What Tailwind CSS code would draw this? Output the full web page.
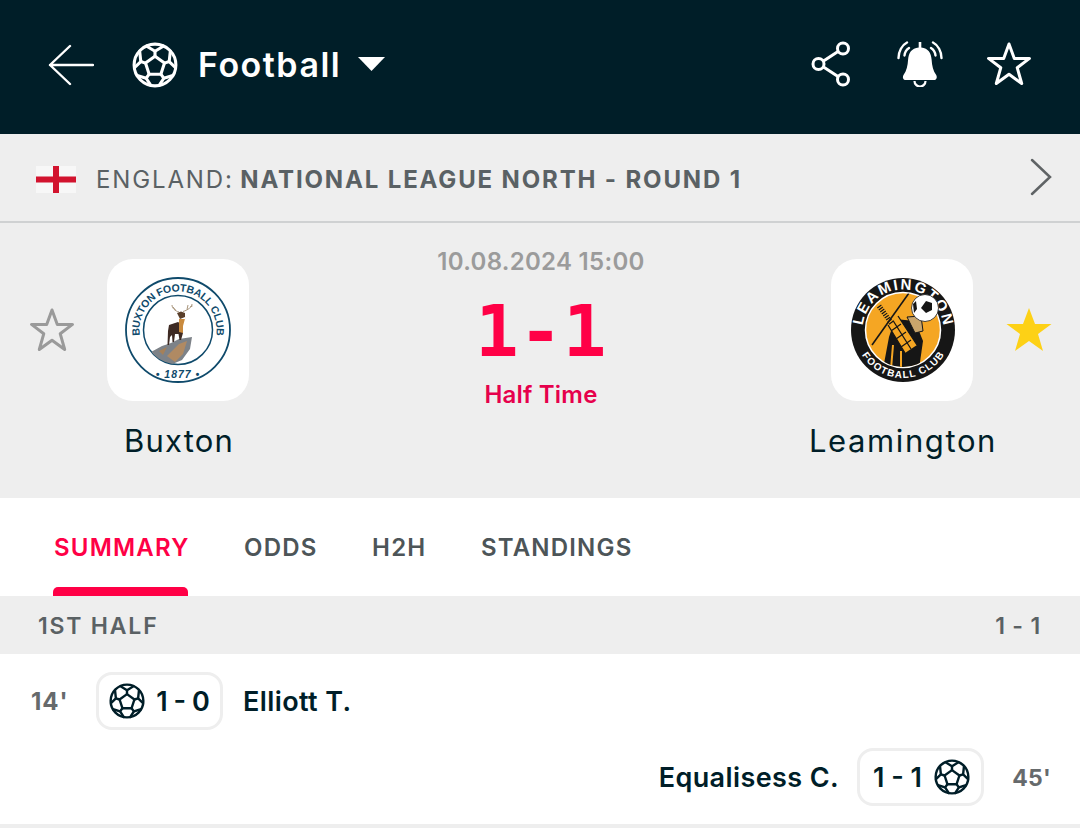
<!DOCTYPE html>
<html lang="en">
<head>
    <meta charset="UTF-8">
    <title>Buxton - Leamington</title>
    <script src="https://cdn.jsdelivr.net/npm/@tailwindcss/browser@4"></script>
</head>
<body class="w-[1080px] h-[828px] overflow-hidden bg-white font-['Inter',sans-serif] text-[#001e28]">
    <svg class="hidden">
        <symbol id="ball" viewBox="0 0 24 24">
            <g fill="none" stroke="currentColor" stroke-width="1.6" stroke-linejoin="round" stroke-linecap="round">
                <circle cx="12" cy="12" r="10.9"/>
                <path d="M12 7.400 16.950 11 15.060 16.800H8.940L7.050 11Z"/>
                <path d="M12 7.400V4.800M16.950 11 19.400 10.200M15.060 16.800 16.600 18.900M8.940 16.800 7.400 18.900M7.050 11 4.600 10.200"/>
                <path d="M7.700 2.200 12 4.800 16.300 2.200M20 4.800 19.400 10.200 22.700 13.400M21.300 17.500 16.600 18.900 14.200 22.600M9.800 22.600 7.400 18.900 2.700 17.500M1.300 13.400 4.600 10.200 4 4.800"/>
            </g>
        </symbol>
    </svg>

    <!-- Header -->
    <header class="h-[134px] bg-[#001e28] flex items-center pl-[48px] pr-[48px] text-white">
        <svg class="w-[46px] h-[42px] mb-[4px]" viewBox="0 0 46 42" fill="none" stroke="currentColor" stroke-width="2.4" stroke-linecap="round" stroke-linejoin="round">
            <path d="M22 2 2 21 22 40M2 21H45"/>
        </svg>
        <svg class="w-[46px] h-[46px] ml-[38px] mb-[5px]"><use href="#ball"/></svg>
        <span class="ml-[20px] text-[34px] font-semibold tracking-[1.500px] leading-none mb-[5px]">Football</span>
        <svg class="w-[27px] h-[14px] ml-[17px] mb-[6px]" viewBox="0 0 27 14" fill="currentColor"><path d="M0 0H27L13.500 14Z"/></svg>
        <div class="ml-auto flex items-center mb-[7px]">
            <svg class="w-[40px] h-[46px]" viewBox="0 0 40 46" fill="none" stroke="currentColor" stroke-width="3">
                <circle cx="32" cy="7.500" r="5.500"/>
                <circle cx="7.500" cy="23" r="5.500"/>
                <circle cx="32" cy="38.500" r="5.500"/>
                <path d="M12.500 20 27 10.500M12.500 26 27 35.500"/>
            </svg>
            <svg class="w-[46px] h-[46px] ml-[46px]" viewBox="0 0 46 46">
                <path fill="currentColor" d="M21.700 1h2.600v5.500c7 .8 9.800 5.500 10.300 12 .4 6 1.500 11.500 4.600 15.500 1 1.600.8 4.500-1.500 5H8c-2.300-.5-2.500-3.400-1.500-5 3.100-4 4.200-9.500 4.600-15.500.5-6.500 3.300-11.200 10.600-12Z"/>
                <path fill="none" stroke="currentColor" stroke-width="2.200" d="M17.500 40a5.500 5.500 0 0 0 11 0"/>
                <path fill="none" stroke="currentColor" stroke-width="2.400" stroke-linecap="round" d="M1.500 17C1.500 10.500 5 4 10 1.500M44.500 17C44.500 10.500 41 4 36 1.500M7.500 14.500C7.800 11.500 9.500 8.500 12 7M38.500 14.500C38.200 11.500 36.500 8.500 34 7"/>
            </svg>
            <svg class="w-[46px] h-[46px] ml-[43px]" viewBox="0 0 46 46" fill="none" stroke="currentColor" stroke-width="3" stroke-linejoin="round">
                <path d="M23 3 28.300 17.400H43.500L31.200 26.700 35.700 42.500 23 33.300 10.300 42.500 14.800 26.700 2.500 17.400H17.700Z"/>
            </svg>
        </div>
    </header>

    <!-- League bar -->
    <div class="h-[89px] bg-[#eeeeee] border-b-2 border-[#cfd1d2] flex items-center pl-[36px] pr-[28px] pt-[3px] text-[#5a6164]">
        <svg class="w-[40px] h-[27px] shrink-0" viewBox="0 0 40 27">
            <rect width="40" height="27" fill="#f7f7f7"/>
            <path fill="#d2132e" d="M17 0h6v27h-6zM0 10.500h40v6H0z"/>
        </svg>
        <span class="ml-[20px] pt-[1px] text-[24px] tracking-[1.85px] leading-none whitespace-nowrap">ENGLAND: <b class="-ml-[2px] font-bold">NATIONAL LEAGUE NORTH - ROUND 1</b></span>
        <svg class="ml-auto w-[22px] h-[38px] mb-[4px]" viewBox="0 0 22 38" fill="none" stroke="#5f6365" stroke-width="2.500" stroke-linecap="round">
            <path d="M2 2 20 19 2 36"/>
        </svg>
    </div>

    <!-- Match -->
    <section class="h-[275px] bg-[#eeeeee] flex pl-[29px] pr-[28px]">
        <svg class="w-[46px] h-[46px] mt-[84px] shrink-0" viewBox="0 0 46 46" fill="none" stroke="#9a9a9a" stroke-width="3" stroke-linejoin="round">
            <path d="M23 3 28.300 17.400H43.500L31.200 26.700 35.700 42.500 23 33.300 10.300 42.500 14.800 26.700 2.500 17.400H17.700Z"/>
        </svg>
        <div class="w-[206px] flex flex-col items-center pt-[36px] shrink-0">
            <div class="w-[142px] h-[142px] bg-white rounded-[26px]">
                <svg viewBox="0 0 142 142" class="w-full h-full">
                    <defs>
                        <clipPath id="inner"><circle cx="71" cy="71" r="34.500"/></clipPath>
                        <path id="buxTop" d="M32.900 76.400A38.500 38.500 0 1 1 109.100 76.400"/>
                    </defs>
                    <circle cx="71" cy="71" r="52" fill="none" stroke="#0f4a6b" stroke-width="1.800"/>
                    <circle cx="71" cy="71" r="34.500" fill="#fff" stroke="#0f4a6b" stroke-width="1.500"/>
                    <text font-family="Liberation Sans, sans-serif" font-size="10.500" font-weight="700" fill="#0f4a6b" text-anchor="middle"><textPath href="#buxTop" startOffset="50%" textLength="132">BUXTON FOOTBALL CLUB</textPath></text>
                    <text x="71" y="119" text-anchor="middle" font-family="Liberation Sans, sans-serif" font-style="italic" font-size="10.500" font-weight="700" fill="#0f4a6b" letter-spacing="1">• 1877 •</text>
                    <g clip-path="url(#inner)">
                        <path fill="#7d8288" d="M44 93 55 87 64 84 72 80 85 78 83 90 75 101 63 106 50 100Z"/>
                        <path fill="#b08a63" d="M60 97 72 85 80 82 76 95 68 103Z"/>
                        <path fill="#a58058" d="M52 92 60 88 56 96Z"/>
                    </g>
                    <path fill="#3e2a23" d="M62 66 71 63 76 66 76 74 74 81H72.500L71.500 75 68 75 67 83H65.500L65 76 63 78 62 86H60.500L61 72Z"/>
                    <path fill="#c98a3e" d="M72 60H78L79 56 76 67 76 74 72 73Z"/>
                    <path fill="#5a3f2b" d="M70 54 74 52.500 78 54 78 58 73 60Z"/>
                    <path fill="none" stroke="#a8957c" stroke-width="1" d="M72 53C68 52 65 49 65 46M68.500 51 66 48M76 52.500C81 51 85 48 85 45M80 50.500 81 46M83 48 85.500 47"/>
                </svg>
            </div>
            <span class="mt-[22px] ml-[2px] text-[31px] leading-[36px] tracking-[1.2px]">Buxton</span>
        </div>

        <div class="flex-1 flex flex-col items-center pl-[3px] pt-[25px]">
            <span class="text-[24px] leading-[28px] font-semibold text-[#9b9b9b] tracking-[0.3px]">10.08.2024 15:00</span>
            <span class="mt-[19px] h-[63px] text-[72px] leading-[72px] font-bold text-[#ff0046] [font-family:'DejaVu_Sans_Mono',monospace] tracking-[0.5px]">1-1</span>
            <span class="mt-[22px] text-[24px] leading-[30px] font-semibold text-[#e6004c] tracking-[0.2px]">Half Time</span>
        </div>

        <div class="w-[208px] flex flex-col items-center pt-[36px] shrink-0">
            <div class="w-[142px] h-[142px] bg-white rounded-[26px]">
                <svg viewBox="0 0 142 142" class="w-full h-full">
                    <defs>
                        <clipPath id="inner2"><circle cx="72" cy="71" r="37"/></clipPath>
                        <path id="leaTop" d="M31.500 71A40.500 40.500 0 0 1 112.500 71"/>
                        <path id="leaBot" d="M28.500 91.300A48 48 0 0 0 115.500 91.300"/>
                    </defs>
                    <circle cx="72" cy="71" r="52" fill="#161616"/>
                    <circle cx="72" cy="71" r="37.500" fill="#f5a623" stroke="#fff" stroke-width="1.500"/>
                    <text font-family="Liberation Sans, sans-serif" font-size="15" font-weight="700" fill="#fff" text-anchor="middle"><textPath href="#leaTop" startOffset="50%" textLength="118">LEAMINGTON</textPath></text>
                    <text font-family="Liberation Sans, sans-serif" font-size="10" font-weight="700" fill="#fff" text-anchor="middle"><textPath href="#leaBot" startOffset="50%" textLength="98">FOOTBALL CLUB</textPath></text>
                    <g clip-path="url(#inner2)">
                        <path fill="#161616" d="M58 78 64 60 84 62 92 82 88 110H52Z"/>
                        <path fill="#f5a623" d="M57 66 67 57 86 86 74 94Z"/>
                        <path stroke="#161616" stroke-width="1.300" fill="none" d="M57 66 74 94M62 61.500 80 90M67 57 86 86M60 72 70 65M65 80 75 73M70 88 80 81"/>
                        <path stroke="#161616" stroke-width="1.600" d="M41 86 78 34"/>
                        <path stroke="#161616" stroke-width="5" stroke-dasharray="1.200 1.300" d="M48 47 61 65"/>
                        <path stroke="#f5a623" stroke-width="2" d="M70 110V92M60 110 62 86"/>
                    </g>
                    <path fill="#c9a56b" stroke="#161616" stroke-width="1" d="M76 58 90 57 92 72 84 74Z"/>
                    <circle cx="94" cy="49" r="13.500" fill="#fff" stroke="#161616" stroke-width="0.800"/>
                    <path fill="#161616" d="M95 42 101 44 101 51 95 54 90 49Z"/>
                    <path fill="#161616" d="M82 45 85 42 86 50 83 54Z"/>
                </svg>
            </div>
            <span class="mt-[22px] ml-[2px] text-[31px] leading-[36px] tracking-[1.600px]">Leamington</span>
        </div>
        <svg class="w-[46px] h-[46px] mt-[84px] shrink-0" viewBox="0 0 46 46" fill="#fdd116">
            <path d="M23 1 29 17H45.500L32 27 37 44 23 34 9 44 14 27 .5 17H17Z"/>
        </svg>
    </section>

    <!-- Tabs -->
    <nav class="h-[98px] bg-white flex gap-[54.500px] pl-[54px] text-[24px] font-semibold tracking-[1.200px] text-[#4d5558]">
        <a class="relative pt-[35px] leading-[30px] text-[#ff0046]">SUMMARY
            <span class="absolute left-[-1px] right-[2px] bottom-0 h-[9px] bg-[#ff0046] rounded-t-[5px]"></span>
        </a>
        <a class="pt-[35px] leading-[30px]">ODDS</a>
        <a class="pt-[35px] leading-[30px]">H2H</a>
        <a class="pt-[35px] leading-[30px]">STANDINGS</a>
    </nav>

    <!-- Incidents -->
    <div class="h-[58px] bg-[#eeeeee] flex items-center justify-between pl-[38px] pr-[39px] pt-[2px] text-[23px] font-semibold text-[#5a6164]">
        <span class="tracking-[1.800px]">1ST HALF</span>
        <span class="tracking-[0.8px]">1 - 1</span>
    </div>

    <div class="h-[76px] flex items-center pl-[31px] pt-[18px]">
        <span class="w-[65px] pt-[2px] text-[24px] font-bold text-[#666a6c] tracking-[1px]">14'</span>
        <span class="h-[58px] w-[127px] border-[3px] border-[#eeeeee] rounded-[16px] flex items-center justify-center gap-[11px] text-[27px] font-semibold [word-spacing:-1px]">
            <svg class="w-[36px] h-[36px]"><use href="#ball"/></svg><span class="pt-[2px]">1 - 0</span>
        </span>
        <span class="ml-[20px] pt-[2px] text-[27px] font-semibold tracking-[0.4px]">Elliott T.</span>
    </div>
    <div class="h-[94px] flex items-center justify-end pr-[29px]">
        <span class="mr-[18px] pt-[2px] text-[27px] font-semibold tracking-[0.4px]">Equalisess C.</span>
        <span class="h-[58px] w-[127px] border-[3px] border-[#eeeeee] rounded-[16px] flex items-center justify-center gap-[12px] text-[27px] font-semibold">
            <span class="pt-[2px]">1 - 1</span><svg class="w-[36px] h-[36px] mr-[-2px]"><use href="#ball"/></svg>
        </span>
        <span class="w-[67px] pt-[2px] text-right text-[23px] font-bold text-[#666a6c] tracking-[0.2px]">45'</span>
    </div>
    <div class="h-[4px] bg-[#eeeeee]"></div>
</body>
</html>
